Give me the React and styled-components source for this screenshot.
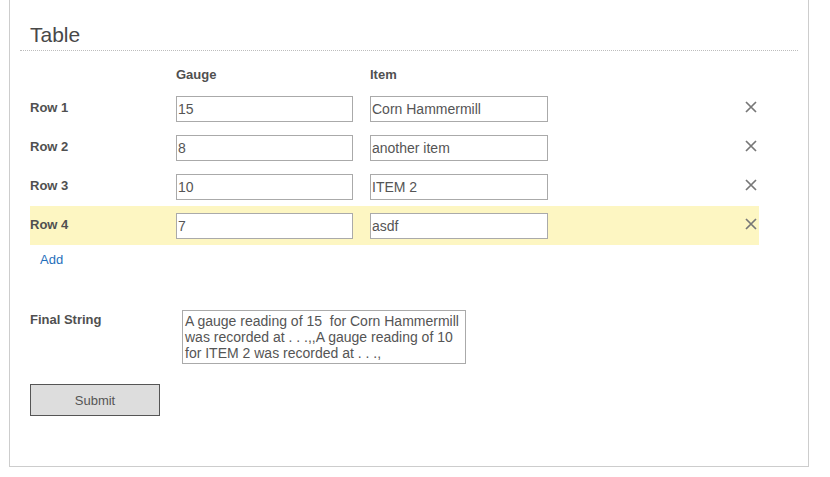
import React from "react";
import styled, { createGlobalStyle } from "styled-components";

const Global = createGlobalStyle`
  html, body { margin: 0; padding: 0; background: #fff; }
  body { font-family: "Liberation Sans", Arial, sans-serif; color: #505050; }
`;

const Panel = styled.div`
  margin-left: 9px;
  width: 800px;
  height: 467px;
  box-sizing: border-box;
  border: 1px solid #cdcdcd;
  border-top: none;
  padding-top: 23px;
`;

const Header = styled.div`
  margin: 0 10px;
  padding: 0 10px 3px;
  border-bottom: 1px dotted #bdbdbd;
`;

const Title = styled.h2`
  margin: 0;
  font-size: 21px;
  line-height: 24px;
  font-weight: normal;
  color: #484848;
`;

const Body = styled.div`
  padding: 16px 20px 0;
`;

const Grid = styled.div`
  display: grid;
  grid-template-columns: 146px 194px 1fr 14px;
  width: 729px;
  background: ${(p) => (p.$highlight ? "#fdf6c2" : "transparent")};
  height: ${(p) => (p.$head ? "22px" : "39px")};
  align-items: start;
`;

const HeadCell = styled.div`
  font-size: 13px;
  line-height: 16px;
  font-weight: bold;
  color: #505050;
`;

const RowLabel = styled.div`
  padding-top: 11px;
  font-size: 13px;
  line-height: 16px;
  font-weight: bold;
  color: #505050;
`;

const Input = styled.input`
  margin-top: 7px;
  width: ${(p) => p.$w}px;
  height: 26px;
  box-sizing: border-box;
  border: 1px solid #aaa;
  padding: 0 1px;
  font-family: "Liberation Sans", Arial, sans-serif;
  font-size: 14px;
  color: #555;
  background: #fff;
  outline: none;
`;

const RemoveBtn = styled.button`
  margin-top: 12px;
  width: 12px;
  height: 12px;
  padding: 0;
  border: none;
  background: none;
  display: flex;
  cursor: pointer;
`;

const AddLink = styled.a`
  display: inline-block;
  margin-top: 7px;
  padding-left: 10px;
  font-size: 13px;
  line-height: 16px;
  color: #1f6fbb;
  text-decoration: none;
`;

const FinalRow = styled.div`
  display: grid;
  grid-template-columns: 152px 284px;
  margin-top: 42px;
  align-items: start;
`;

const FinalLabel = styled.div`
  padding-top: 2px;
  font-size: 13px;
  line-height: 16px;
  font-weight: bold;
  color: #505050;
`;

const FinalBox = styled.div`
  box-sizing: border-box;
  width: 284px;
  height: 54px;
  border: 1px solid #aaa;
  padding: 2px 2px;
  font-size: 14px;
  line-height: 16px;
  color: #555;
  white-space: pre;
  overflow: hidden;
`;

const Submit = styled.button`
  display: block;
  margin-top: 20px;
  width: 130px;
  height: 32px;
  box-sizing: border-box;
  background: #dddddd;
  border: 1px solid #555;
  font-family: "Liberation Sans", Arial, sans-serif;
  font-size: 13px;
  color: #555;
  padding: 0;
`;

const XIcon = () => (
  <svg width="12" height="12" viewBox="0 0 12 12">
    <path d="M1 1 L11 11 M11 1 L1 11" stroke="#777" strokeWidth="1.7" fill="none" />
  </svg>
);

const rows = [
  { label: "Row 1", gauge: "15", item: "Corn Hammermill" },
  { label: "Row 2", gauge: "8", item: "another item" },
  { label: "Row 3", gauge: "10", item: "ITEM 2" },
  { label: "Row 4", gauge: "7", item: "asdf", highlight: true },
];

export default function App() {
  return (
    <>
      <Global />
      <Panel>
        <Header>
          <Title>Table</Title>
        </Header>
        <Body>
          <Grid $head>
            <div />
            <HeadCell>Gauge</HeadCell>
            <HeadCell>Item</HeadCell>
            <div />
          </Grid>
          {rows.map((r) => (
            <Grid key={r.label} $highlight={r.highlight}>
              <RowLabel>{r.label}</RowLabel>
              <div>
                <Input $w={177} defaultValue={r.gauge} />
              </div>
              <div>
                <Input $w={178} defaultValue={r.item} />
              </div>
              <RemoveBtn aria-label="remove">
                <XIcon />
              </RemoveBtn>
            </Grid>
          ))}
          <AddLink href="#">Add</AddLink>
          <FinalRow>
            <FinalLabel>Final String</FinalLabel>
            <FinalBox>
              {"A gauge reading of 15  for Corn Hammermill\nwas recorded at . . .,,A gauge reading of 10\nfor ITEM 2 was recorded at . . .,"}
            </FinalBox>
          </FinalRow>
          <Submit>Submit</Submit>
        </Body>
      </Panel>
    </>
  );
}
